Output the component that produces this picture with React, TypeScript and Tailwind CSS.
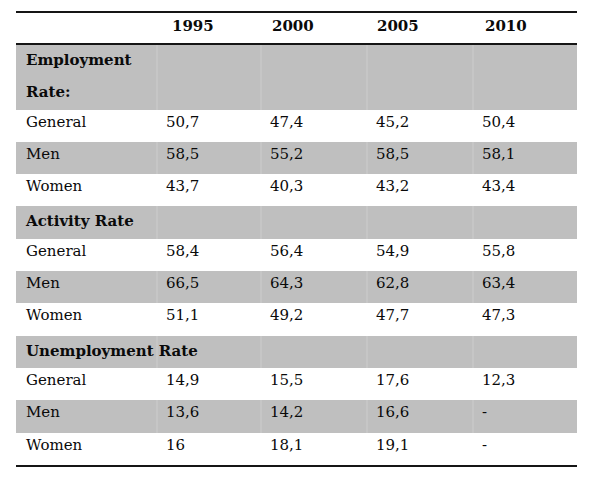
import React from 'react';

type Row = {
    label: string;
    values?: string[];
    gray?: boolean;
    heading?: boolean;
};

const rows: Row[] = [
    { label: 'Employment Rate:', heading: true, gray: true },
    { label: 'General', values: ['50,7', '47,4', '45,2', '50,4'] },
    { label: 'Men', values: ['58,5', '55,2', '58,5', '58,1'], gray: true },
    { label: 'Women', values: ['43,7', '40,3', '43,2', '43,4'] },
    { label: 'Activity Rate', heading: true, gray: true },
    { label: 'General', values: ['58,4', '56,4', '54,9', '55,8'] },
    { label: 'Men', values: ['66,5', '64,3', '62,8', '63,4'], gray: true },
    { label: 'Women', values: ['51,1', '49,2', '47,7', '47,3'] },
    { label: 'Unemployment Rate', heading: true, gray: true },
    { label: 'General', values: ['14,9', '15,5', '17,6', '12,3'] },
    { label: 'Men', values: ['13,6', '14,2', '16,6', '-'], gray: true },
    { label: 'Women', values: ['16', '18,1', '19,1', '-'] },
];

const years = [
    { y: '1995', pad: 'pl-[16px]' },
    { y: '2000', pad: 'pl-[12px]' },
    { y: '2005', pad: 'pl-[11px]' },
    { y: '2010', pad: 'pl-[13px]' },
];

const gridCols = 'grid grid-cols-[140px_104px_106px_106px_105px]';

export default function App() {
    return (
        <div className="w-[601px] h-[479px] bg-white pt-[11px] pl-[16px] text-[15px] text-[#0a0a0a]"
            style={{ fontFamily: '"DejaVu Serif", "Liberation Serif", serif' }}>
            <div className="w-[561px] border-t-2 border-b-2 border-[#151515]">
                {/* header */}
                <div className={`${gridCols} h-[32px] leading-[24px] font-bold border-b-2 border-[#151515]`}>
                    <div />
                    {years.map((c) => (
                        <div key={c.y} className={`${c.pad} pt-[1px]`}>{c.y}</div>
                    ))}
                </div>

                {rows.map((r, i) => (
                    <div key={i} className={`${gridCols} ${r.gray ? 'bg-[#bfbfbf]' : 'bg-white'} ${r.heading ? (i === 0 ? 'h-[64.6px]' : 'h-[32.3px]') : ''} overflow-hidden`}>
                        {r.heading ? (
                            <>
                                <div className={`${i === 0 ? 'w-[130px]' : 'whitespace-nowrap'} pl-[10px] font-bold leading-[32.3px] -mt-[1px]`}>
                                    {r.label}
                                </div>
                                {[0, 1, 2, 3].map((k) => (
                                    <div key={k} className="shadow-[inset_2px_0_0_#c6c6c6]" />
                                ))}
                            </>
                        ) : (
                            <>
                                <div className="h-[32.3px] pl-[10px] leading-[24px]">{r.label}</div>
                                {r.values!.map((v, k) => (
                                    <div key={k} className={`h-[32.3px] pl-[10px] leading-[24px] ${r.gray ? 'shadow-[inset_2px_0_0_#c6c6c6]' : ''}`}>
                                        {v}
                                    </div>
                                ))}
                            </>
                        )}
                    </div>
                ))}
            </div>
        </div>
    );
}
